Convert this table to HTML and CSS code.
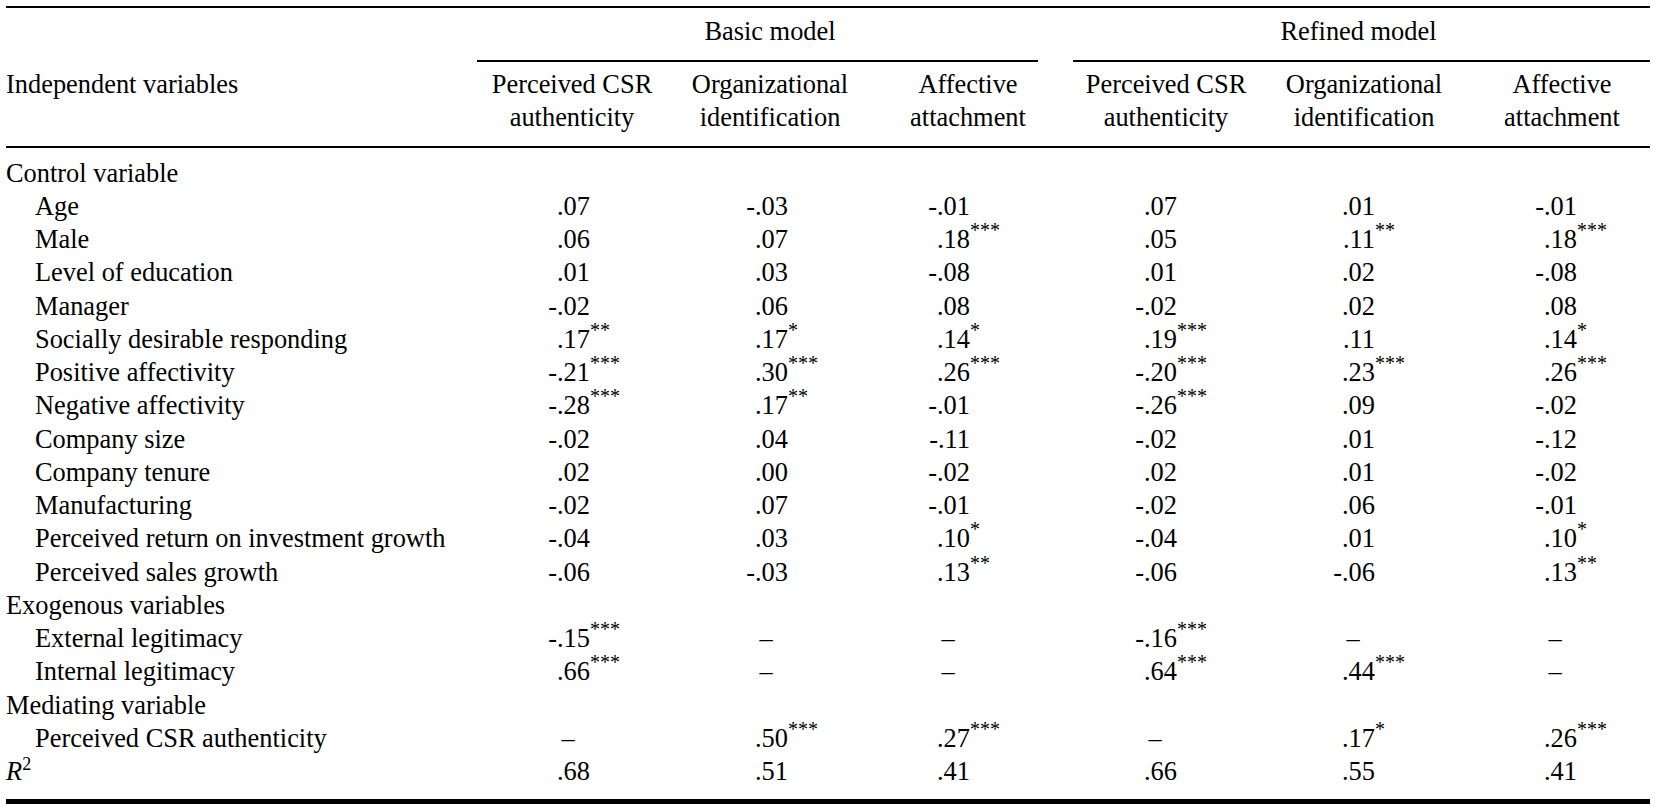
FILE: index.html
```html
<!DOCTYPE html>
<html lang="en">
<head>
<meta charset="utf-8">
<title>Regression table</title>
<link rel="stylesheet" href="styles.css">
</head>
<body>
<div class="page">
<table class="t">
  <colgroup>
    <col class="c-lbl">
    <col class="c-v"><col class="c-v"><col class="c-v">
    <col class="c-v"><col class="c-v"><col class="c-v-last">
  </colgroup>
  <thead>
    <tr class="grp">
      <th></th>
      <th colspan="3" class="g g-basic">Basic model</th>
      <th colspan="3" class="g g-ref">Refined model</th>
    </tr>
    <tr class="hdr">
      <th class="lbl">Independent variables</th>
      <th>Perceived CSR<br>authenticity</th>
      <th>Organizational<br>identification</th>
      <th>Affective<br>attachment</th>
      <th>Perceived CSR<br>authenticity</th>
      <th>Organizational<br>identification</th>
      <th class="last">Affective<br>attachment</th>
    </tr>
  </thead>
  <tbody>
    <tr class="first"><td class="lbl" colspan="7">Control variable</td></tr>
    <tr><td class="lbl sub">Age</td><td><span class="v">.07</span></td><td><span class="v">-.03</span></td><td><span class="v">-.01</span></td><td><span class="v">.07</span></td><td><span class="v">.01</span></td><td><span class="v">-.01</span></td></tr>
    <tr><td class="lbl sub">Male</td><td><span class="v">.06</span></td><td><span class="v">.07</span></td><td><span class="v">.18</span><sup>***</sup></td><td><span class="v">.05</span></td><td><span class="v">.11</span><sup>**</sup></td><td><span class="v">.18</span><sup>***</sup></td></tr>
    <tr><td class="lbl sub">Level of education</td><td><span class="v">.01</span></td><td><span class="v">.03</span></td><td><span class="v">-.08</span></td><td><span class="v">.01</span></td><td><span class="v">.02</span></td><td><span class="v">-.08</span></td></tr>
    <tr><td class="lbl sub">Manager</td><td><span class="v">-.02</span></td><td><span class="v">.06</span></td><td><span class="v">.08</span></td><td><span class="v">-.02</span></td><td><span class="v">.02</span></td><td><span class="v">.08</span></td></tr>
    <tr><td class="lbl sub">Socially desirable responding</td><td><span class="v">.17</span><sup>**</sup></td><td><span class="v">.17</span><sup>*</sup></td><td><span class="v">.14</span><sup>*</sup></td><td><span class="v">.19</span><sup>***</sup></td><td><span class="v">.11</span></td><td><span class="v">.14</span><sup>*</sup></td></tr>
    <tr><td class="lbl sub">Positive affectivity</td><td><span class="v">-.21</span><sup>***</sup></td><td><span class="v">.30</span><sup>***</sup></td><td><span class="v">.26</span><sup>***</sup></td><td><span class="v">-.20</span><sup>***</sup></td><td><span class="v">.23</span><sup>***</sup></td><td><span class="v">.26</span><sup>***</sup></td></tr>
    <tr><td class="lbl sub">Negative affectivity</td><td><span class="v">-.28</span><sup>***</sup></td><td><span class="v">.17</span><sup>**</sup></td><td><span class="v">-.01</span></td><td><span class="v">-.26</span><sup>***</sup></td><td><span class="v">.09</span></td><td><span class="v">-.02</span></td></tr>
    <tr><td class="lbl sub">Company size</td><td><span class="v">-.02</span></td><td><span class="v">.04</span></td><td><span class="v">-.11</span></td><td><span class="v">-.02</span></td><td><span class="v">.01</span></td><td><span class="v">-.12</span></td></tr>
    <tr><td class="lbl sub">Company tenure</td><td><span class="v">.02</span></td><td><span class="v">.00</span></td><td><span class="v">-.02</span></td><td><span class="v">.02</span></td><td><span class="v">.01</span></td><td><span class="v">-.02</span></td></tr>
    <tr><td class="lbl sub">Manufacturing</td><td><span class="v">-.02</span></td><td><span class="v">.07</span></td><td><span class="v">-.01</span></td><td><span class="v">-.02</span></td><td><span class="v">.06</span></td><td><span class="v">-.01</span></td></tr>
    <tr><td class="lbl sub">Perceived return on investment growth</td><td><span class="v">-.04</span></td><td><span class="v">.03</span></td><td><span class="v">.10</span><sup>*</sup></td><td><span class="v">-.04</span></td><td><span class="v">.01</span></td><td><span class="v">.10</span><sup>*</sup></td></tr>
    <tr><td class="lbl sub">Perceived sales growth</td><td><span class="v">-.06</span></td><td><span class="v">-.03</span></td><td><span class="v">.13</span><sup>**</sup></td><td><span class="v">-.06</span></td><td><span class="v">-.06</span></td><td><span class="v">.13</span><sup>**</sup></td></tr>
    <tr><td class="lbl" colspan="7">Exogenous variables</td></tr>
    <tr><td class="lbl sub">External legitimacy</td><td><span class="v">-.15</span><sup>***</sup></td><td><span class="v d">–</span></td><td><span class="v d">–</span></td><td><span class="v">-.16</span><sup>***</sup></td><td><span class="v d">–</span></td><td><span class="v d">–</span></td></tr>
    <tr><td class="lbl sub">Internal legitimacy</td><td><span class="v">.66</span><sup>***</sup></td><td><span class="v d">–</span></td><td><span class="v d">–</span></td><td><span class="v">.64</span><sup>***</sup></td><td><span class="v">.44</span><sup>***</sup></td><td><span class="v d">–</span></td></tr>
    <tr><td class="lbl" colspan="7">Mediating variable</td></tr>
    <tr><td class="lbl sub">Perceived CSR authenticity</td><td><span class="v d">–</span></td><td><span class="v">.50</span><sup>***</sup></td><td><span class="v">.27</span><sup>***</sup></td><td><span class="v d">–</span></td><td><span class="v">.17</span><sup>*</sup></td><td><span class="v">.26</span><sup>***</sup></td></tr>
    <tr class="last-row"><td class="lbl"><i>R</i><sup class="sq">2</sup></td><td><span class="v">.68</span></td><td><span class="v">.51</span></td><td><span class="v">.41</span></td><td><span class="v">.66</span></td><td><span class="v">.55</span></td><td><span class="v">.41</span></td></tr>
  </tbody>
</table>
</div>
</body>
</html>
```

FILE: styles.css
```css
html, body {
  margin: 0;
  padding: 0;
  background: #ffffff;
}

body {
  font-family: "Liberation Serif", "Times New Roman", serif;
  font-size: 26.4px;
  color: #000000;
}

.page {
  padding: 6px 0 0 6px;
}

.t {
  width: 1644px;
  table-layout: fixed;
  border-collapse: separate;
  border-spacing: 0;
  line-height: 33px;
}

.c-lbl { width: 467px; }
.c-v { width: 198px; }
.c-v-last { width: 187px; }

.t th {
  font-weight: normal;
  padding: 0;
  vertical-align: top;
  white-space: nowrap;
}

.grp th {
  border-top: 2px solid #000;
  padding-top: 7px;
  text-align: center;
}

.g::after {
  content: "";
  display: block;
  border-bottom: 2px solid #000;
  margin-top: 12px;
}

.g-basic::after {
  margin-left: 4px;
  margin-right: 29px;
}

.g-ref::after {
  margin-left: 6px;
  margin-right: 0;
}

.hdr th {
  padding-top: 6px;
  padding-bottom: 12px;
  border-bottom: 2px solid #000;
  text-align: center;
}

.hdr th.lbl {
  text-align: left;
}

.hdr th.last {
  padding-left: 11px;
}

.t td {
  padding: 0;
  line-height: 33.25px;
  white-space: nowrap;
  text-align: left;
  vertical-align: top;
}

.t td.sub {
  padding-left: 29px;
}

.t tbody tr.first td {
  padding-top: 8.5px;
}

.t tbody tr.last-row td {
  padding-bottom: 10.5px;
  border-bottom: 5px solid #000;
}

.t tbody td:nth-child(2) { padding-left: 73px; }
.t tbody td:nth-child(3) { padding-left: 73px; }
.t tbody td:nth-child(4) { padding-left: 57px; }
.t tbody td:nth-child(5) { padding-left: 66px; }
.t tbody td:nth-child(6) { padding-left: 66px; }
.t tbody td:nth-child(7) { padding-left: 70px; }

.v {
  display: inline-block;
  width: 44px;
  text-align: right;
}

.v.d {
  text-align: center;
}

.t sup {
  font-size: 20px;
  line-height: 0;
  vertical-align: 11px;
}

.t sup.sq {
  font-size: 18px;
  vertical-align: 10px;
}
```
